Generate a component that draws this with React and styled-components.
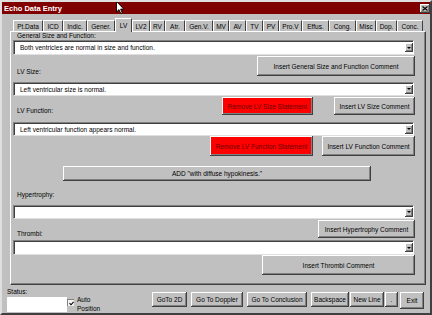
import React from "react";
import styled, { createGlobalStyle } from "styled-components";

const FONT = `"Liberation Sans", Arial, sans-serif`;

const GlobalStyle = createGlobalStyle`
  html, body { margin: 0; padding: 0; background: #c0c0c0; }
  body { font-family: ${FONT}; }
  * { box-sizing: border-box; }
`;

const raised = `inset -1px -1px #404040, inset 1px 1px #ffffff, inset -2px -2px #808080`;

const Window = styled.div`
  position: relative;
  width: 432px;
  height: 315px;
  display: flex;
  flex-direction: column;
  background: #c0c0c0;
  border-top: 2px solid #dfdfdf;
  border-left: 2px solid #dfdfdf;
  border-right: 2px solid #404040;
  border-bottom: 2px solid #404040;
  font-family: ${FONT};
  font-size: 6.5px;
  color: #000;
  overflow: hidden;
`;

const TitleBar = styled.div`
  flex: none;
  height: 12px;
  margin-right: -2px;
  background: #800000;
  display: flex;
  align-items: center;
  padding-left: 2px;
`;

const TitleText = styled.span`
  color: #fff;
  font-weight: bold;
  font-size: 7.5px;
  white-space: nowrap;
`;

const CloseBox = styled.div`
  margin-left: auto;
  margin-right: 2px;
  width: 10px;
  height: 9px;
  background: #c0c0c0;
  box-shadow: ${raised};
  display: flex;
  align-items: center;
  justify-content: center;
`;

const TabStrip = styled.div`
  flex: none;
  margin-top: 4px;
  height: 13px;
  display: flex;
  align-items: flex-end;
  padding-left: 11px;
  position: relative;
  z-index: 2;
`;

const Tab = styled.div`
  width: ${(p) => p.$w}px;
  height: ${(p) => (p.$active ? 14 : 11)}px;
  margin-bottom: ${(p) => (p.$active ? -1 : 0)}px;
  background: #c0c0c0;
  border-top: 1px solid #ffffff;
  border-left: 1px solid #ffffff;
  border-right: 1px solid #404040;
  display: flex;
  align-items: ${(p) => (p.$active ? "flex-start" : "center")};
  padding-top: ${(p) => (p.$active ? 3 : 0)}px;
  justify-content: center;
  white-space: nowrap;
`;

const Panel = styled.div`
  flex: none;
  margin-left: 8px;
  width: 416px;
  height: 254px;
  border-top: 1px solid #ffffff;
  border-left: 1px solid #ffffff;
  border-right: 1px solid #404040;
  border-bottom: 1px solid #404040;
  box-shadow: inset -1px -1px #808080;
  padding: 0 10px 0 2px;
  display: flex;
  flex-direction: column;
`;

const FieldLabel = styled.div`
  flex: none;
  height: 8px;
  line-height: 8px;
  margin-top: ${(p) => p.$mt || 0}px;
  padding-left: 4px;
  white-space: nowrap;
`;

const Combo = styled.div`
  flex: none;
  height: ${(p) => p.$h}px;
  margin-top: ${(p) => p.$mt || 0}px;
  margin-right: 1px;
  background: #fff;
  border-top: 1px solid #808080;
  border-left: 1px solid #808080;
  border-right: 1px solid #ffffff;
  border-bottom: 1px solid #dfdfdf;
  box-shadow: inset 1px 1px #404040;
  display: flex;
  align-items: center;
  padding-left: 6px;
  white-space: nowrap;
`;

const ComboArrow = styled.div`
  margin-left: auto;
  width: 8px;
  height: 9px;
  background: #c0c0c0;
  box-shadow: ${raised};
  display: flex;
  align-items: center;
  justify-content: center;
  &::after {
    content: "";
    border-left: 2px solid transparent;
    border-right: 2px solid transparent;
    border-top: 2px solid #000;
    margin-left: -1px;
  }
`;

const ActionRow = styled.div`
  flex: none;
  height: ${(p) => p.$h}px;
  margin-top: ${(p) => p.$mt || 0}px;
  display: flex;
  align-items: flex-end;
  justify-content: flex-end;
  gap: ${(p) => p.$gap || 0}px;
`;

const RowLabel = styled.div`
  margin-right: auto;
  padding-left: 4px;
  line-height: 8px;
  white-space: nowrap;
`;

const Btn = styled.button`
  align-self: stretch;
  width: ${(p) => p.$w}px;
  margin: 0;
  padding: 0;
  border: none;
  background: ${(p) => (p.$danger ? "#ff0000" : "#c0c0c0")};
  color: ${(p) => (p.$danger ? "#6a0000" : "#000")};
  box-shadow: ${raised};
  font-family: ${FONT};
  font-size: 6.5px;
  white-space: nowrap;
  text-align: center;
`;

const WideBtn = styled(Btn)`
  flex: none;
  align-self: auto;
  height: 15px;
  margin-top: 10px;
  margin-left: 50px;
`;

const Footer = styled.div`
  flex: 1;
  display: flex;
  padding: 0 6px 0 5px;
`;

const StatusBlock = styled.div`
  display: flex;
  flex-direction: column;
`;

const StatusLabel = styled.div`
  margin-top: 3px;
  height: 8px;
  line-height: 8px;
`;

const StatusRow = styled.div`
  margin-top: 1px;
  display: flex;
  align-items: flex-start;
`;

const StatusBox = styled.div`
  width: 60px;
  height: 15px;
  background: #fff;
`;

const CheckBox = styled.div`
  width: 7px;
  height: 7px;
  margin-top: 2px;
  background: #f4f4f4;
  border-top: 1px solid #808080;
  border-left: 1px solid #808080;
  display: flex;
  align-items: center;
  justify-content: center;
`;

const AutoLabel = styled.div`
  margin-left: 3px;
  margin-top: -2px;
  line-height: 9px;
`;

const NavGroup = styled.div`
  margin-left: auto;
  margin-top: 7px;
  display: flex;
  align-items: flex-start;
`;

const NavBtn = styled(Btn)`
  align-self: auto;
  height: ${(p) => p.$h || 15}px;
  margin-left: ${(p) => p.$ml || 0}px;
`;

const Cursor = styled.svg`
  position: absolute;
  left: 114px;
  top: -1px;
  z-index: 5;
`;

const tabs = [
  ["Pt.Data", 30],
  ["ICD", 20],
  ["Indic.", 24],
  ["Gener.", 28],
  ["LV", 17, true],
  ["LV2", 18],
  ["RV", 15],
  ["Atr.", 20],
  ["Gen.V.", 28],
  ["MV", 16],
  ["AV", 17],
  ["TV", 17],
  ["PV", 16],
  ["Pro.V", 23],
  ["Effus.", 27],
  ["Cong.", 27],
  ["Misc", 20],
  ["Dop.", 21],
  ["Conc.", 26],
];

const navButtons = [
  ["GoTo 2D", 35, 0],
  ["Go To Doppler", 52, 4],
  ["Go To Conclusion", 60, 4],
  ["Backspace", 38, 4],
  ["New Line", 34, 1],
  [".", 13, 1],
  ["Exit", 24, 2, 17],
];

function ComboBox({ h, mt, children }) {
  return (
    <Combo $h={h} $mt={mt}>
      <span>{children}</span>
      <ComboArrow />
    </Combo>
  );
}

export default function App() {
  return (
    <>
      <GlobalStyle />
      <Window>
        <TitleBar>
          <TitleText>Echo Data Entry</TitleText>
          <CloseBox>
            <svg width="6" height="5" viewBox="0 0 6 5">
              <path d="M0.5 0.5 L5.5 4.5 M5.5 0.5 L0.5 4.5" stroke="#000" strokeWidth="1.1" />
            </svg>
          </CloseBox>
        </TitleBar>

        <TabStrip>
          {tabs.map(([label, w, active]) => (
            <Tab key={label} $w={w} $active={active}>
              {label}
            </Tab>
          ))}
        </TabStrip>

        <Panel>
          <FieldLabel>General Size and Function:</FieldLabel>
          <ComboBox h={15}>Both ventricles are normal in size and function.</ComboBox>
          <ActionRow $h={20} $mt={1}>
            <RowLabel>LV Size:</RowLabel>
            <Btn $w={158}>Insert General Size and Function Comment</Btn>
          </ActionRow>

          <ComboBox h={14} mt={6}>Left ventricular size is normal.</ComboBox>
          <ActionRow $h={18} $mt={1} $gap={21}>
            <RowLabel>LV Function:</RowLabel>
            <Btn $w={91} $danger>Remove LV Size Statement</Btn>
            <Btn $w={81}>Insert LV Size Comment</Btn>
          </ActionRow>

          <ComboBox h={14} mt={7}>Left ventricular function appears normal.</ComboBox>
          <ActionRow $h={20} $gap={9}>
            <Btn $w={103} $danger>Remove LV Function Statement</Btn>
            <Btn $w={93}>Insert LV Function Comment</Btn>
          </ActionRow>

          <WideBtn $w={308}>ADD "with diffuse hypokinesis."</WideBtn>

          <FieldLabel $mt={10}>Hypertrophy:</FieldLabel>
          <ComboBox h={14} mt={6} />
          <ActionRow $h={18} $mt={1}>
            <RowLabel>Thrombi:</RowLabel>
            <Btn $w={97}>Insert Hypertrophy Comment</Btn>
          </ActionRow>

          <ComboBox h={15} mt={2} />
          <ActionRow $h={20}>
            <Btn $w={153}>Insert Thrombi Comment</Btn>
          </ActionRow>
        </Panel>

        <Footer>
          <StatusBlock>
            <StatusLabel>Status:</StatusLabel>
            <StatusRow>
              <StatusBox />
              <CheckBox>
                <svg width="5" height="5" viewBox="0 0 5 5">
                  <path d="M0.5 2.2 L2 3.8 L4.6 0.8" stroke="#000" strokeWidth="1.1" fill="none" />
                </svg>
              </CheckBox>
              <AutoLabel>
                Auto
                <br />
                Position
              </AutoLabel>
            </StatusRow>
          </StatusBlock>
          <NavGroup>
            {navButtons.map(([label, w, ml, h]) => (
              <NavBtn key={label} $w={w} $ml={ml} $h={h}>
                {label}
              </NavBtn>
            ))}
          </NavGroup>
        </Footer>

        <Cursor width="9" height="14" viewBox="0 0 9 14">
          <path
            d="M0.5 0.5 L0.5 11 L3 8.6 L4.8 12.6 L6.3 12 L4.6 8.1 L7.8 8.1 Z"
            fill="#fff"
            stroke="#000"
            strokeWidth="0.9"
          />
        </Cursor>
      </Window>
    </>
  );
}
